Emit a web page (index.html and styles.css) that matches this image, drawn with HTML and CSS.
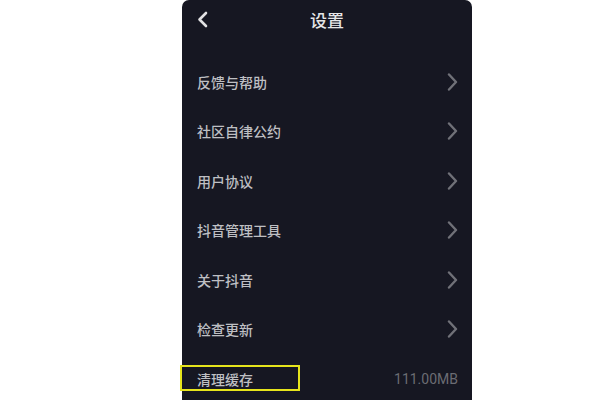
FILE: index.html
```html
<!DOCTYPE html>
<html lang="zh-CN">
<head>
    <meta charset="UTF-8">
    <meta name="viewport" content="width=device-width, initial-scale=1.0">
    <title>设置</title>
    <link rel="stylesheet" href="styles.css">
</head>
<body>

    <div class="panel">
        <!-- Cabeçalho -->
        <div class="header">
            <svg class="back" width="12" height="18" viewBox="0 0 12 18">
                <path d="M9 2 L2.5 8.5 L9 15" fill="none" stroke="#e2e2e4" stroke-width="2.6" stroke-linecap="round" stroke-linejoin="round"/>
            </svg>
            <h1>设置</h1>
        </div>

        <div class="list">
            <div class="row"><span>反馈与帮助</span><svg class="arrow" width="12" height="18" viewBox="0 0 12 18"><path d="M3 1.5 L10 9 L3 16.5" fill="none" stroke="#707178" stroke-width="2.4" stroke-linecap="round" stroke-linejoin="round"/></svg></div>
            <div class="row"><span>社区自律公约</span><svg class="arrow" width="12" height="18" viewBox="0 0 12 18"><path d="M3 1.5 L10 9 L3 16.5" fill="none" stroke="#707178" stroke-width="2.4" stroke-linecap="round" stroke-linejoin="round"/></svg></div>
            <div class="row"><span>用户协议</span><svg class="arrow" width="12" height="18" viewBox="0 0 12 18"><path d="M3 1.5 L10 9 L3 16.5" fill="none" stroke="#707178" stroke-width="2.4" stroke-linecap="round" stroke-linejoin="round"/></svg></div>
            <div class="row"><span>抖音管理工具</span><svg class="arrow" width="12" height="18" viewBox="0 0 12 18"><path d="M3 1.5 L10 9 L3 16.5" fill="none" stroke="#707178" stroke-width="2.4" stroke-linecap="round" stroke-linejoin="round"/></svg></div>
            <div class="row"><span>关于抖音</span><svg class="arrow" width="12" height="18" viewBox="0 0 12 18"><path d="M3 1.5 L10 9 L3 16.5" fill="none" stroke="#707178" stroke-width="2.4" stroke-linecap="round" stroke-linejoin="round"/></svg></div>
            <div class="row"><span>检查更新</span><svg class="arrow" width="12" height="18" viewBox="0 0 12 18"><path d="M3 1.5 L10 9 L3 16.5" fill="none" stroke="#707178" stroke-width="2.4" stroke-linecap="round" stroke-linejoin="round"/></svg></div>
            <div class="row cache">
                <span>清理缓存</span>
                <span class="size">111.00MB</span>
                <!-- Destaque amarelo -->
                <div class="highlight"></div>
            </div>
        </div>
    </div>

</body>
</html>
```

FILE: styles.css
```css
body {
    font-family: "Noto Sans CJK SC", "Noto Sans", sans-serif;
    background-color: #fff;
    margin: 0;
    padding: 0;
    height: 400px;
    overflow: hidden;
}

.panel {
    margin-left: 182px;
    width: 290px;
    height: 400px;
    background-color: #161722;
    border-radius: 7px 7px 0 0;
}

.header {
    position: relative;
    height: 40px;
    display: flex;
    align-items: center;
    justify-content: center;
}

.back {
    position: absolute;
    left: 15px;
    top: 11px;
}

h1 {
    margin: 0;
    font-size: 17px;
    font-weight: 500;
    color: #e6e6e8;
    line-height: 40px;
}

.list {
    padding-top: 17px;
}

.row {
    position: relative;
    height: 49.5px;
    display: flex;
    align-items: center;
    justify-content: space-between;
    padding: 0 14px 0 15px;
    font-size: 14px;
    font-weight: 500;
    color: #bebfc3;
}

.size {
    font-family: Roboto, "Liberation Sans", sans-serif;
    font-size: 14px;
    font-weight: 400;
    color: #6b6c73;
}

.highlight {
    position: absolute;
    left: -2px;
    top: 11px;
    width: 116px;
    height: 22px;
    border: 2px solid #e6e41c;
}
```
